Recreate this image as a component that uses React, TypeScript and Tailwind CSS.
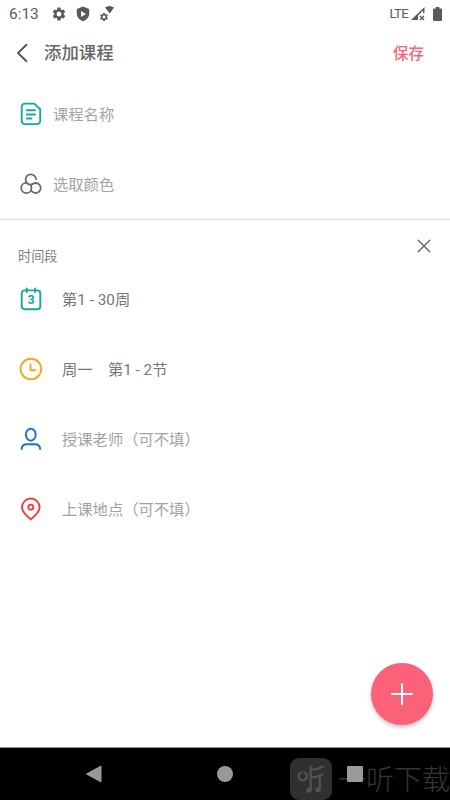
import type { ReactNode } from "react";
import { MdSettings } from "react-icons/md";

const FONT = "font-['Roboto','Noto_Sans_CJK_SC',sans-serif]";

interface RowProps {
  icon: ReactNode;
  text: string;
  filled?: boolean;
  wide?: boolean;
}

function Row({ icon, text, filled, wide }: RowProps) {
  return (
    <div className={`flex h-[70px] items-center pl-[18px] ${wide ? "gap-[18px]" : "gap-[9px]"}`}>
      <span className="h-[26px] w-[26px] shrink-0">{icon}</span>
      <span
        className={`whitespace-pre pt-[3px] text-[15.3px] leading-none ${
          filled ? "text-[#777]" : "text-[#a3a3a3]"
        }`}
      >
        {text}
      </span>
    </div>
  );
}

function NoteIcon() {
  return (
    <svg viewBox="0 0 26 26" className="h-full w-full" fill="none" stroke="#12ab98" strokeWidth="1.9" strokeLinecap="round" strokeLinejoin="round">
      <path d="M7 2.6h9.2L22.2 8.2V20a3.1 3.1 0 0 1-3.1 3.1H7A3.3 3.3 0 0 1 3.7 19.800V5.900A3.3 3.3 0 0 1 7 2.600z" />
      <path d="M8.7 9.300h8.300M8.700 13.500h8.300M8.700 17.500h4.800" />
    </svg>
  );
}

function ColorIcon() {
  return (
    <svg viewBox="0 0 26 26" className="h-full w-full" fill="none" stroke="#6a6a6a" strokeWidth="1.800" strokeLinecap="round">
      <path d="M18 8.300A5.200 5.200 0 1 0 12.900 13.700" />
      <path d="M8.200 11.900A5.100 5.100 0 1 0 13.400 17C13.400 15.700 13.200 14.700 12.900 13.700" />
      <path d="M13.500 19.700A5 5 0 1 0 17.600 12C15.800 12 14.600 13.300 12.900 13.700" />
    </svg>
  );
}

function CalendarIcon() {
  return (
    <svg viewBox="0 0 26 26" className="h-full w-full" fill="none" stroke="#12ab98" strokeWidth="1.9" strokeLinecap="round">
      <rect x="3.7" y="4.4" width="18.6" height="18.9" rx="3" />
      <path d="M8.8 2.400v3.600M17.200 2.400v3.600" />
      <text x="13" y="18.400" textAnchor="middle" fill="#12ab98" stroke="none" className="font-['Roboto'] text-[12.500px] font-bold">
        3
      </text>
    </svg>
  );
}

function ClockIcon() {
  return (
    <svg viewBox="0 0 26 26" className="h-full w-full" fill="none" stroke="#fca41c" strokeWidth="1.900" strokeLinecap="round" strokeLinejoin="round">
      <circle cx="12.9" cy="13" r="10.3" />
      <path d="M12.500 8.200v6h5" />
    </svg>
  );
}

function TeacherIcon() {
  return (
    <svg viewBox="0 0 26 26" className="h-full w-full" fill="none" stroke="#1272d8" strokeWidth="1.900" strokeLinecap="round">
      <ellipse cx="12.8" cy="8.700" rx="4.900" ry="6" />
      <path d="M3.700 23.100c0-3.300 2.500-4.900 5.400-4.900h7.600c2.900 0 5.400 1.600 5.400 4.900" />
    </svg>
  );
}

function PlaceIcon() {
  return (
    <svg viewBox="0 0 26 26" className="h-full w-full" fill="none" stroke="#f73c3c" strokeWidth="1.900" strokeLinejoin="round">
      <path d="M12.8 23.300C9.400 20.500 4 16.500 4 11.300a8.800 8.800 0 0 1 17.600 0c0 5.200-5.400 9.200-8.800 12z" />
      <circle cx="12.8" cy="11.100" r="2.500" />
    </svg>
  );
}

function StatusBar() {
  return (
    <div className="flex h-[27px] items-center pl-[9px] pr-[8px] text-[#5a5a5a]">
      <span className="w-[42px] pt-[2px] text-[15.400px] leading-none tracking-[0px]">6:13</span>
      <MdSettings size={16} />
      <svg viewBox="0 0 16 16" className="ml-[8px] h-4 w-4">
        <path fill="currentColor" fillRule="evenodd" d="M8 .6l6.200 2.300v4.800c0 3.500-2.600 6.300-6.200 7.500-3.600-1.200-6.200-4-6.200-7.500V2.900zM6 4.900v6l5-3z" />
      </svg>
      <span className="ml-[8px] flex h-4 items-end">
        <MdSettings size={10} />
        <svg viewBox="0 0 9 8" className="-ml-[4px] mb-[8px] h-[8px] w-[9px]">
          <path fill="currentColor" d="M0 1.500Q4.500-1.500 9 1.500L4.800 7.500z" />
        </svg>
      </span>
      <span className="ml-auto pt-px text-[13.200px] leading-none tracking-[-0.700px]">LTE</span>
      <svg viewBox="0 0 15 14" className="ml-[3px] h-[14px] w-[15px]">
        <path fill="currentColor" fillRule="evenodd" d="M0 13L13.500 0v6H12V3.600L7 8.600V13z" />
        <path d="M9 9l4 4M13 9l-4 4" stroke="currentColor" strokeWidth="1.300" />
      </svg>
      <svg viewBox="0 0 9 14" className="ml-[7px] h-[14px] w-[9px]">
        <path fill="currentColor" d="M2.700 0h3.600v1.500H8q1 0 1 1V13q0 1-1 1H1q-1 0-1-1V2.500q0-1 1-1h1.700z" />
      </svg>
    </div>
  );
}

function NavigationBar() {
  return (
    <div className="relative h-[53px] overflow-hidden border-t border-[#8c8c8c] bg-black">
      {/* watermark */}
      <div className="absolute left-[290px] top-[10px] flex items-center whitespace-nowrap text-[#363636]">
        <svg viewBox="0 0 42 42" className="mr-[6px] h-[42px] w-[42px] shrink-0">
          <rect width="42" height="42" rx="9" fill="#303030" />
          <g fill="none" stroke="#535353" strokeWidth="2.200" strokeLinecap="round" strokeLinejoin="round">
            <path d="M14.300 14.300A4.200 4.200 0 1 1 11 14.400" />
            <path d="M20.700 32V8.500M20.700 11.500Q27 12 32.500 8.500M20.700 19.500Q27 19.500 32.500 16.500M29.800 18v13.500" />
          </g>
          <circle cx="18.700" cy="32.300" r="2.500" fill="#535353" />
          <circle cx="27.800" cy="31.800" r="2.500" fill="#535353" />
        </svg>
        <span className="pt-[4px] text-[28px] font-light leading-none">一听下载</span>
      </div>
      <svg viewBox="0 0 18 20" className="absolute left-[85px] top-[16px] h-5 w-[18px]">
        <path d="M1.500 10L16 2v16z" fill="#999" stroke="#999" strokeLinejoin="round" />
      </svg>
      <div className="absolute left-[217px] top-[18px] h-4 w-4 rounded-full bg-[#999]" />
      <div className="absolute left-[347px] top-[18px] h-4 w-4 rounded-[1px] bg-[#999]" />
    </div>
  );
}

export default function App() {
  return (
    <div className={`relative flex h-[800px] w-[450px] flex-col overflow-hidden bg-white ${FONT}`}>
      <StatusBar />

      <header className="flex h-[52px] items-center pl-[15px] pr-[26px]">
        <svg viewBox="0 0 14 20" className="h-5 w-[14px]" fill="none" stroke="#555" strokeWidth="1.900" strokeLinecap="round" strokeLinejoin="round">
          <path d="M11.500 1.800L3 10l8.500 8.200" />
        </svg>
        <h1 className="ml-[15px] pt-[2px] text-[17.400px] font-medium leading-none text-[#666]">添加课程</h1>
        <button className="ml-auto pt-[3px] text-[15.500px] font-medium leading-none text-[#fb6279]">保存</button>
      </header>

      <section className="border-b border-[#dcdcdc]">
        <Row icon={<NoteIcon />} text="课程名称" />
        <Row icon={<ColorIcon />} text="选取颜色" />
      </section>

      <section className="flex-1">
        <div className="flex h-[44px] items-start justify-between pl-[18px] pr-[19px]">
          <span className="mt-[30px] text-[13.200px] leading-none text-[#808080]">时间段</span>
          <svg viewBox="0 0 14 14" className="mt-[19px] h-[14px] w-[14px]" stroke="#5f5f5f" strokeWidth="1.300" strokeLinecap="round">
            <path d="M1.200 1.200l11.600 11.600M12.800 1.200L1.200 12.800" />
          </svg>
        </div>
        <Row wide filled icon={<CalendarIcon />} text="第1 - 30周" />
        <Row wide filled icon={<ClockIcon />} text="周一　第1 - 2节" />
        <Row wide icon={<TeacherIcon />} text="授课老师（可不填）" />
        <Row wide icon={<PlaceIcon />} text="上课地点（可不填）" />
      </section>

      <button className="absolute left-[371px] top-[663px] flex h-[62px] w-[62px] items-center justify-center rounded-full bg-[#fb6279] shadow-[0_2px_4px_rgba(0,0,0,0.25)]">
        <svg viewBox="0 0 22 22" className="h-[22px] w-[22px]" stroke="#fff" strokeWidth="2" strokeLinecap="round">
          <path d="M11 1v20M1 11h20" />
        </svg>
      </button>

      <NavigationBar />
    </div>
  );
}
